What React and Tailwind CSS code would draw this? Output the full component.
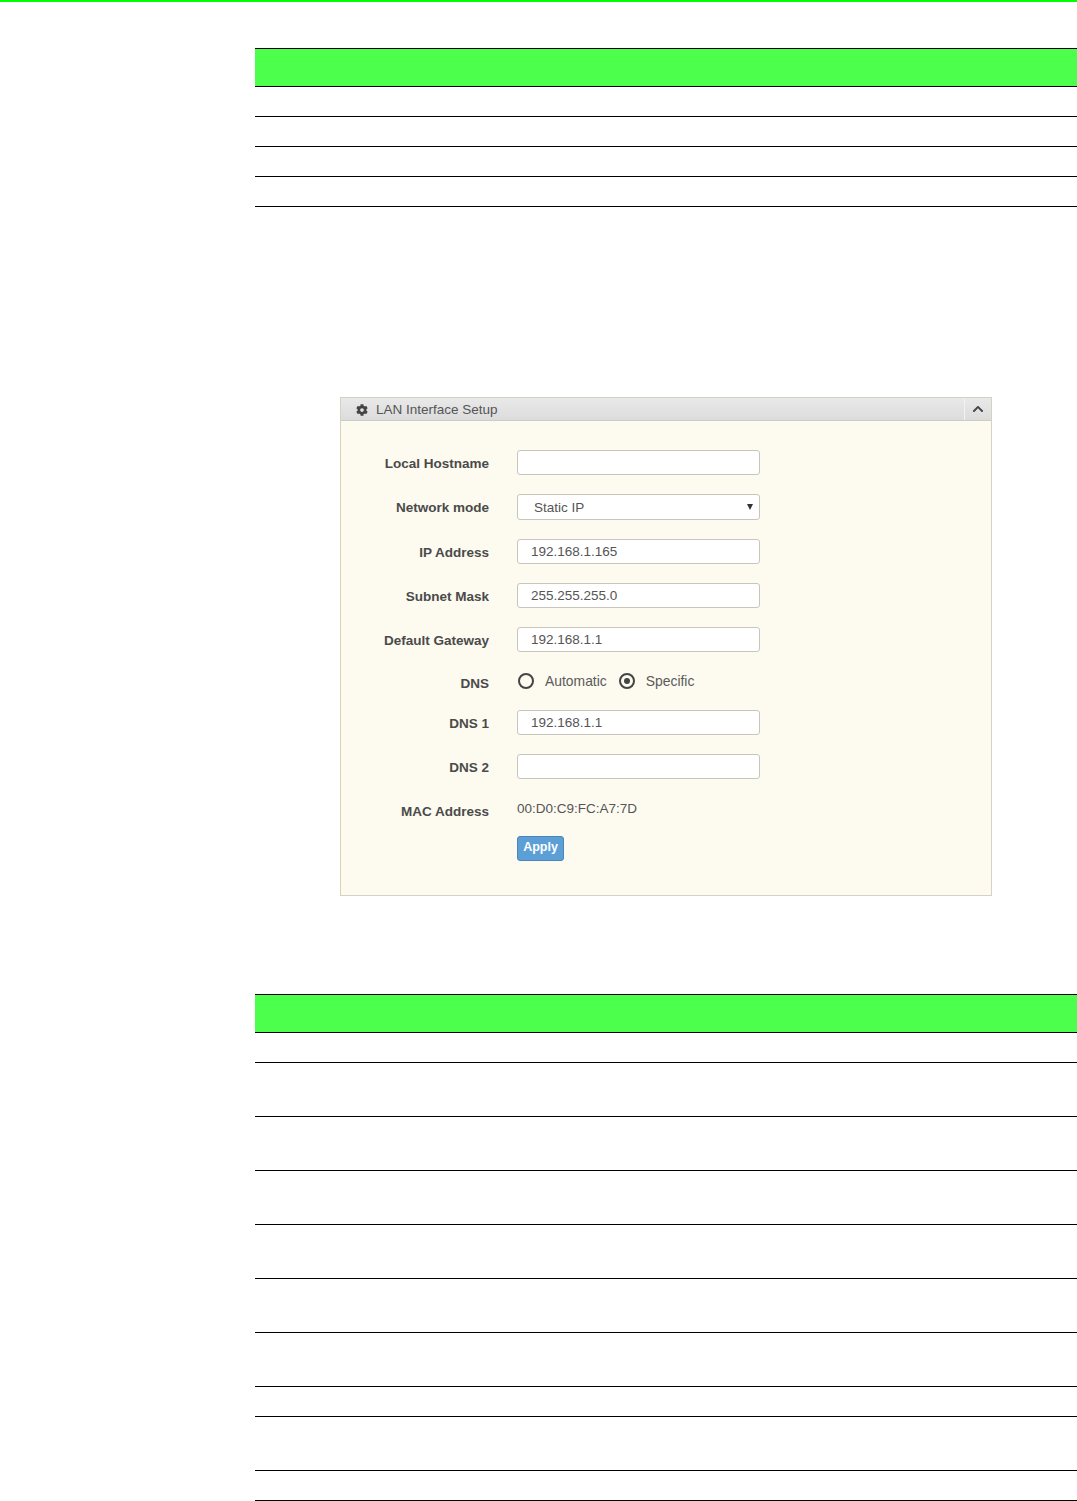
import { FaCog, FaChevronUp } from "react-icons/fa";

const firstTable = [30, 30, 30, 30];
const secondTable = [30, 54, 54, 54, 54, 54, 54, 30, 54, 30];

function LineTable({ rows }) {
  return (
    <div className="ml-[255px]">
      <div className="h-[39px] border-y border-black bg-[#4dff4d]" />
      {rows.map((height, i) => (
        <div
          key={i}
          className={`border-b border-black ${height === 30 ? "h-[30px]" : "h-[54px]"}`}
        />
      ))}
    </div>
  );
}

function Label({ children, className = "" }) {
  return (
    <div className={`w-[148px] text-right text-[13.5px] leading-[20px] font-bold text-[#4a4a4a] ${className}`}>
      {children}
    </div>
  );
}

function TextRow({ label, value }) {
  return (
    <div className="flex h-[25px] gap-[28px]">
      <Label className="pt-[4px]">{label}</Label>
      <input
        readOnly
        value={value}
        className="h-[25px] w-[243px] rounded-[3px] border border-[#c9c5bb] bg-white px-[13px] text-[13.5px] text-[#555555] outline-none"
      />
    </div>
  );
}

function Radio({ checked, label }) {
  return (
    <label className="flex items-center gap-[11px] text-[13.9px] leading-[20px] text-[#5a5a5a]">
      <span className="flex h-[16px] w-[16px] items-center justify-center rounded-full border-2 border-[#444444]">
        {checked && <span className="h-[6px] w-[6px] rounded-full bg-[#444444]" />}
      </span>
      {label}
    </label>
  );
}

export default function App() {
  return (
    <div className="h-[1501px] overflow-hidden bg-white font-['Liberation_Sans',Arial,sans-serif]">
      <div className="h-[2px] bg-[#00ff00]" />

      <div className="mt-[46px]">
        <LineTable rows={firstTable} />
      </div>

      <div className="mt-[190px] ml-[340px] h-[499px] w-[652px] border border-[#d6d1c1] bg-[#fdfbf0]">
        <div className="flex h-[23px] items-center justify-between border-b border-[#cfccc0] bg-gradient-to-b from-[#e9e9e9] to-[#dcdcdc]">
          <div className="flex items-center gap-[8px] pt-[2px] pl-[15px] text-[13.5px] text-[#555555]">
            <FaCog className="h-[12px] w-[12px] text-[#444444]" />
            LAN Interface Setup
          </div>
          <div className="flex h-full w-[27px] items-center justify-center border-l border-[#f2f2f2]">
            <FaChevronUp className="h-[12px] w-[12px] text-[#444444]" />
          </div>
        </div>

        <div className="flex flex-col gap-[19.25px] pt-[29px]">
          <TextRow label="Local Hostname" value="" />
          <div className="flex h-[25px] gap-[28px]">
            <Label className="pt-[4px]">Network mode</Label>
            <div className="relative h-[26px] w-[243px]">
              <select className="h-full w-full appearance-none rounded-[3px] border border-[#c9c5bb] bg-white pt-[1px] pl-[16px] text-[13.5px] text-[#555555] outline-none">
                <option>Static IP</option>
              </select>
              <svg className="absolute top-[10px] right-[7px] h-[6px] w-[6px]" viewBox="0 0 6 6">
                <path d="M0 0h6L3 6z" fill="#333333" />
              </svg>
            </div>
          </div>
          <TextRow label="IP Address" value="192.168.1.165" />
          <TextRow label="Subnet Mask" value="255.255.255.0" />
          <TextRow label="Default Gateway" value="192.168.1.1" />
          <div className="flex h-[19.5px] gap-[28px]">
            <Label className="pt-[3px]">DNS</Label>
            <div className="flex h-[20px] items-center gap-[12px] pl-[1px]">
              <Radio label="Automatic" />
              <Radio checked label="Specific" />
            </div>
          </div>
          <TextRow label="DNS 1" value="192.168.1.1" />
          <TextRow label="DNS 2" value="" />
          <div className="flex h-[16px] gap-[28px]">
            <Label className="pt-[3px]">MAC Address</Label>
            <div className="text-[13.5px] leading-[20px] text-[#555555]">00:D0:C9:FC:A7:7D</div>
          </div>
          <div className="ml-[176px]">
            <button className="h-[25px] w-[47px] rounded-[3px] border border-[#4a86b8] bg-[#5b9fd6] pb-[3px] text-[12.5px] font-bold text-white">
              Apply
            </button>
          </div>
        </div>
      </div>

      <div className="mt-[98px]">
        <LineTable rows={secondTable} />
      </div>
    </div>
  );
}
